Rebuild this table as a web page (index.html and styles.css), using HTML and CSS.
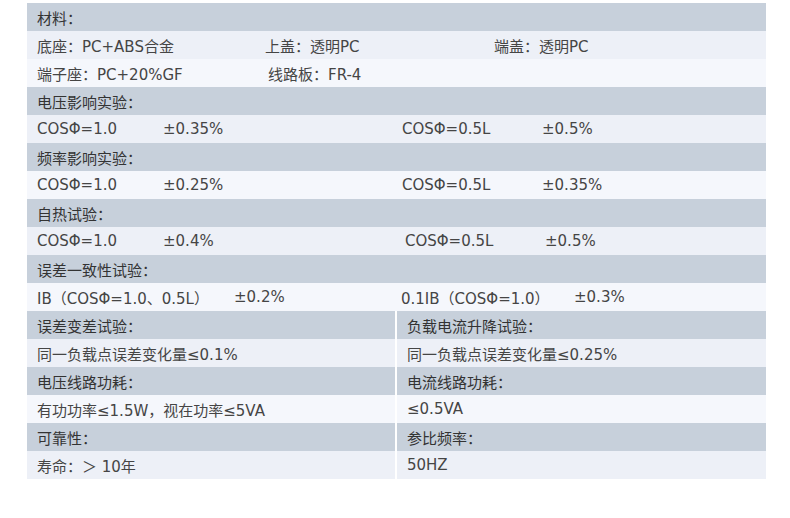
FILE: index.html
```html
<!DOCTYPE html>
<html lang="zh-CN">
<head>
<meta charset="utf-8">
<title>技术参数</title>
<link rel="stylesheet" href="styles.css">
</head>
<body>
<div class="spec">
  <div class="row head">材料：</div>
  <div class="row a mat">
    <span class="m1">底座：PC+ABS合金</span>
    <span class="m2">上盖：透明PC</span>
    <span>端盖：透明PC</span>
  </div>
  <div class="row b mat">
    <span class="m1">端子座：PC+20%GF</span>
    <span class="m2 nudge">线路板：FR-4</span>
  </div>

  <div class="row head">电压影响实验：</div>
  <div class="row a test">
    <span class="t1">COSΦ=1.0</span>
    <span class="t2">±0.35%</span>
    <span class="t3">COSΦ=0.5L</span>
    <span>±0.5%</span>
  </div>

  <div class="row head">频率影响实验：</div>
  <div class="row b test">
    <span class="t1">COSΦ=1.0</span>
    <span class="t2">±0.25%</span>
    <span class="t3">COSΦ=0.5L</span>
    <span>±0.35%</span>
  </div>

  <div class="row head">自热试验：</div>
  <div class="row a test">
    <span class="t1">COSΦ=1.0</span>
    <span class="t2 wide">±0.4%</span>
    <span class="t3">COSΦ=0.5L</span>
    <span>±0.5%</span>
  </div>

  <div class="row head">误差一致性试验：</div>
  <div class="row b test">
    <span class="i1">IB（COSΦ=1.0、0.5L）</span>
    <span class="i2">±0.2%</span>
    <span class="i3">0.1IB（COSΦ=1.0）</span>
    <span>±0.3%</span>
  </div>

  <div class="split">
    <div class="cell head">误差变差试验：</div>
    <div class="cell head">负载电流升降试验：</div>
    <div class="cell a">同一负载点误差变化量≤0.1%</div>
    <div class="cell a">同一负载点误差变化量≤0.25%</div>
    <div class="cell head">电压线路功耗：</div>
    <div class="cell head">电流线路功耗：</div>
    <div class="cell b">有功功率≤1.5W，视在功率≤5VA</div>
    <div class="cell b">≤0.5VA</div>
    <div class="cell head">可靠性：</div>
    <div class="cell head">参比频率：</div>
    <div class="cell a">寿命：＞ 10年</div>
    <div class="cell a">50HZ</div>
  </div>
</div>
</body>
</html>
```

FILE: styles.css
```css
html, body {
  margin: 0;
  padding: 0;
  background: #ffffff;
}

body {
  font-family: "DejaVu Sans", "Noto Sans CJK SC", sans-serif;
  font-size: 15px;
  color: #454545;
}

.spec {
  width: 739px;
  margin: 3px 0 0 27px;
}

.row,
.cell {
  height: 28px;
  display: flex;
  align-items: center;
  padding-left: 10px;
  white-space: nowrap;
  box-sizing: border-box;
}

.head {
  background: #c7d0db;
  color: #333333;
}

.a {
  background: #edf0f7;
}

.b {
  background: #f5f7fc;
}

/* material rows */
.mat .m1 {
  width: 228px;
  flex: none;
}

.mat .m2 {
  width: 229px;
  flex: none;
}

.mat .nudge {
  padding-left: 3px;
}

/* test rows */
.test .t1 {
  width: 126px;
  flex: none;
}

.test .t2 {
  width: 239px;
  flex: none;
}

.test .t3 {
  width: 140px;
  flex: none;
}

.test .wide {
  width: 242px;
}

.test .i1 {
  width: 197px;
  flex: none;
}

.test .i2 {
  width: 167px;
  flex: none;
}

.test .i3 {
  width: 173px;
  flex: none;
}

/* two-column section */
.split {
  display: grid;
  grid-template-columns: 368px 369px;
  column-gap: 2px;
}
```
